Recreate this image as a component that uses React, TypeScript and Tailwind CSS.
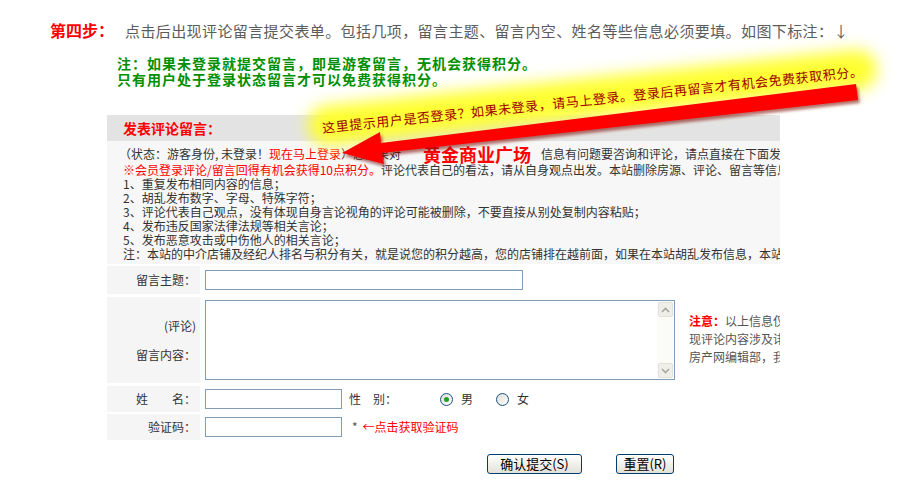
export default function App() {
  return (
    <div className="relative w-[900px] h-[504px] overflow-hidden bg-white font-['Noto_Sans_CJK_SC','Liberation_Sans',sans-serif]">
      {/* step heading */}
      <div className="flex items-baseline whitespace-nowrap pl-[50px] pt-[20px] leading-[20px]">
        <span className="text-[16px] font-bold text-[#ff0000]">第四步：</span>
        <span className="ml-[11px] text-[15px] tracking-[0.4px] text-[#5c5c5c]">
          点击后出现评论留言提交表单。包括几项，留言主题、留言内空、姓名等些信息必须要填。如图下标注：↓
        </span>
      </div>
      <div className="mt-[14px] whitespace-nowrap pl-[117px] text-[14px] font-bold leading-[16px] tracking-[1px] text-[#008f00]">
        <p>注：如果未登录就提交留言，即是游客留言，无机会获得积分。</p>
        <p>只有用户处于登录状态留言才可以免费获得积分。</p>
      </div>

      {/* comment panel */}
      <div className="ml-[107px] mt-[28px] w-[673px] overflow-hidden">
        <div className="flex h-[26px] items-center bg-[#e3e3e3] pl-[16px] text-[14px] font-bold text-[#ff0000]">
          发表评论留言：
        </div>
        <div className="whitespace-nowrap bg-[#f7f7f7] pb-[3px] pl-[12px] pt-[4px] text-[12px] leading-[14px] text-[#333]">
          <div className="flex h-[18px] items-center">
            <span>（状态：游客身份, 未登录！</span>
            <span className="text-[#ff0000]">现在马上登录</span>
            <span>）您如果对</span>
            <span className="ml-[22px] mr-[10px] text-[18px] font-bold leading-[18px] text-[#ff0000]">黄金商业广场</span>
            <span>信息有问题要咨询和评论，请点直接在下面发表您的评论。</span>
          </div>
          <div className="pl-[4px]">
            <p>
              <span className="text-[#ff0000]">※会员登录评论/留言回得有机会获得10点积分。</span>
              评论代表自己的看法，请从自身观点出发。本站删除房源、评论、留言等信息的标准：
            </p>
            <p>1、重复发布相同内容的信息；</p>
            <p>2、胡乱发布数字、字母、特殊字符；</p>
            <p>3、评论代表自己观点，没有体现自身言论视角的评论可能被删除，不要直接从别处复制内容粘贴；</p>
            <p>4、发布违反国家法律法规等相关言论；</p>
            <p>5、发布恶意攻击或中伤他人的相关言论；</p>
            <p>注：本站的中介店铺及经纪人排名与积分有关，就是说您的积分越高，您的店铺排在越前面，如果在本站胡乱发布信息，本站将扣除积分。</p>
          </div>
        </div>

        {/* form */}
        <div className="mt-[2px] text-[12px] leading-[14px] text-[#333]">
          <div className="flex h-[28px]">
            <div className="flex w-[93px] shrink-0 items-center justify-end bg-[#f5f5f5] pr-[4px]">留言主题：</div>
            <div className="flex items-center pl-[5px]">
              <div className="h-[20px] w-[318px] shrink-0 border border-[#7f9db9] bg-white" />
            </div>
          </div>

          <div className="mt-[3px] flex h-[86px]">
            <div className="flex w-[93px] shrink-0 flex-col items-end justify-center gap-[15px] bg-[#f5f5f5] pr-[4px]">
              <span>(评论)</span>
              <span>留言内容：</span>
            </div>
            <div className="ml-[5px] mt-[3px] flex h-[80px] w-[470px] shrink-0 border border-[#7f9db9] bg-white">
              <div className="flex-1" />
              <div className="flex w-[17px] flex-col justify-between bg-[#fbfbf8] p-[1px]">
                <div className="flex h-[15px] items-center justify-center rounded-[2px] border border-[#e2e1d9] bg-[#efeee8]">
                  <svg width="9" height="6" viewBox="0 0 9 6">
                    <path d="M1 5 L4.5 1.5 L8 5" fill="none" stroke="#a8a79f" strokeWidth="1.6" />
                  </svg>
                </div>
                <div className="flex h-[15px] items-center justify-center rounded-[2px] border border-[#e2e1d9] bg-[#efeee8]">
                  <svg width="9" height="6" viewBox="0 0 9 6">
                    <path d="M1 1 L4.5 4.5 L8 1" fill="none" stroke="#a8a79f" strokeWidth="1.6" />
                  </svg>
                </div>
              </div>
            </div>
            <div className="ml-[14px] shrink-0 whitespace-nowrap pt-[15px] leading-[18px] text-[#555]">
              <p>
                <span className="font-bold text-[#ff0000]">注意：</span>以上信息仅代表网友个人观点，如发
              </p>
              <p>现评论内容涉及诽谤、色情、攻击等，请联系</p>
              <p>房产网编辑部，我们将及时删除。</p>
            </div>
          </div>

          <div className="mt-[3px] flex h-[26px]">
            <div className="flex w-[93px] shrink-0 items-center justify-end bg-[#f5f5f5] pr-[4px]">姓　　名：</div>
            <div className="flex items-center whitespace-nowrap pl-[5px]">
              <div className="h-[20px] w-[137px] shrink-0 border border-[#7f9db9] bg-white" />
              <span className="ml-[7px]">性　别：</span>
              <div className="ml-[43px] flex h-[13px] w-[13px] items-center justify-center rounded-full border border-[#1c5180] bg-gradient-to-br from-[#dcdcd7] to-white">
                <div className="h-[5px] w-[5px] rounded-full bg-[#21a121]" />
              </div>
              <span className="ml-[8px]">男</span>
              <div className="ml-[23px] h-[13px] w-[13px] rounded-full border border-[#1c5180] bg-gradient-to-br from-[#dcdcd7] to-white" />
              <span className="ml-[8px]">女</span>
            </div>
          </div>

          <div className="mt-[2px] flex h-[26px]">
            <div className="flex w-[93px] shrink-0 items-center justify-end bg-[#f5f5f5] pr-[4px]">验证码：</div>
            <div className="flex items-center whitespace-nowrap pl-[5px]">
              <div className="h-[20px] w-[137px] shrink-0 border border-[#7f9db9] bg-white" />
              <span className="ml-[10px] text-[#555]">*</span>
              <span className="ml-[5px] text-[#ff0000]">←点击获取验证码</span>
            </div>
          </div>
        </div>

        <div className="mt-[14px] flex pl-[380px] text-[13px] text-black">
          <button className="flex h-[20px] w-[95px] items-center justify-center rounded-[3px] border border-[#003c74] bg-gradient-to-b from-white to-[#e3e2d8]">
            确认提交(S)
          </button>
          <button className="ml-[34px] flex h-[20px] w-[58px] items-center justify-center rounded-[3px] border border-[#003c74] bg-gradient-to-b from-white to-[#e3e2d8]">
            重置(R)
          </button>
        </div>
      </div>

      {/* yellow hint over the panel */}
      <div className="pointer-events-none absolute left-[322px] top-[114px] origin-left -rotate-6 whitespace-nowrap">
        <div className="absolute -inset-x-[14px] -inset-y-[8px] rounded-full bg-[#ffff30] blur-[8px]" />
        <span className="relative text-[13px] leading-[16px] tracking-[0.6px] text-[#a00000]">
          这里提示用户是否登录？如果未登录，请马上登录。登录后再留言才有机会免费获取积分。
        </span>
      </div>

      {/* red arrow */}
      <svg className="pointer-events-none absolute left-0 top-0" width="900" height="504" viewBox="0 0 900 504">
        <defs>
          <filter id="sh" x="-10%" y="-50%" width="120%" height="200%">
            <feGaussianBlur stdDeviation="1.5" />
          </filter>
        </defs>
        <polygon
          points="344,156 382,135 383,146 858,87 860,103 384,156 386,167"
          fill="#7a0000"
          opacity="0.55"
          filter="url(#sh)"
        />
        <polygon points="342,153 380,132 381,143 856,84 858,100 382,153 384,164" fill="#ff0000" />
      </svg>
    </div>
  );
}
